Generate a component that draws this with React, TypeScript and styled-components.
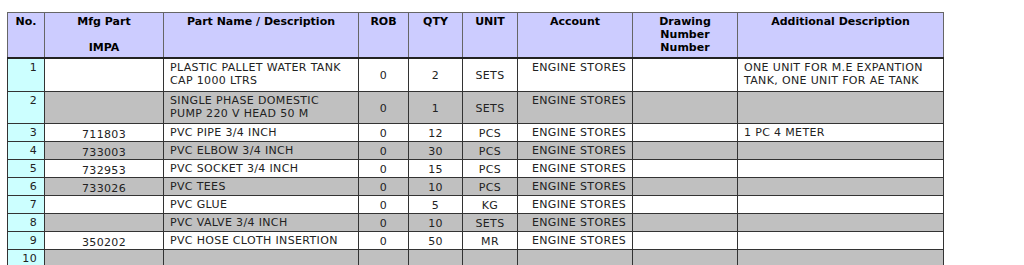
import React from "react";
import styled, { createGlobalStyle } from "styled-components";

const Global = createGlobalStyle`
  html, body { margin: 0; padding: 0; background: #ffffff; }
  body { font-family: "DejaVu Sans", Verdana, sans-serif; }
`;

const Page = styled.div`
  padding: 12px 0 0 7px;
`;

const Table = styled.table`
  border-collapse: collapse;
  table-layout: fixed;
  width: 937px;
  font-family: "DejaVu Sans", Verdana, sans-serif;
  font-size: 11px;
  color: #222;
  border: 1px solid #444;
`;

const HeadCell = styled.th`
  background: #ccccff;
  color: #000;
  font-weight: bold;
  text-align: center;
  vertical-align: top;
  line-height: 13px;
  padding: 2px 2px 0;
  height: 42px;
  border: 1px solid #666;
  border-bottom: 2px solid #222;
`;

type Align = "left" | "center" | "right";

const Cell = styled.td<{ $align?: Align; $middle?: boolean; $pl?: number; $pr?: number }>`
  text-align: ${(p) => p.$align ?? "left"};
  vertical-align: ${(p) => (p.$middle ? "middle" : "top")};
  line-height: 13px;
  letter-spacing: 0.35px;
  padding: 2px ${(p) => p.$pr ?? 2}px 0 ${(p) => p.$pl ?? 2}px;
  border: 1px solid #333;
  white-space: normal;
`;

const NoCell = styled(Cell)`
  background: #ccffff;
`;

const ImpaText = styled.span`
  display: inline-block;
  padding-top: 2px;
`;

const Row = styled.tr<{ $gray: boolean; $h: number }>`
  background: ${(p) => (p.$gray ? "#c0c0c0" : "#ffffff")};
  height: ${(p) => p.$h}px;
`;

const cols = [37, 119, 195, 50, 54, 55, 115, 105, 206];

type Item = {
  no: number;
  impa?: string;
  name?: React.ReactNode;
  rob?: string;
  qty?: string;
  unit?: string;
  account?: string;
  add?: React.ReactNode;
  h: number;
};

const items: Item[] = [
  {
    no: 1,
    name: (
      <>
        PLASTIC PALLET WATER TANK
        <br />
        CAP 1000 LTRS
      </>
    ),
    rob: "0",
    qty: "2",
    unit: "SETS",
    account: "ENGINE STORES",
    add: (
      <>
        ONE UNIT FOR M.E EXPANTION
        <br />
        TANK, ONE UNIT FOR AE TANK
      </>
    ),
    h: 33,
  },
  {
    no: 2,
    name: (
      <>
        SINGLE PHASE DOMESTIC
        <br />
        PUMP 220 V HEAD 50 M
      </>
    ),
    rob: "0",
    qty: "1",
    unit: "SETS",
    account: "ENGINE STORES",
    h: 32,
  },
  { no: 3, impa: "711803", name: "PVC PIPE 3/4 INCH", rob: "0", qty: "12", unit: "PCS", account: "ENGINE STORES", add: "1 PC 4 METER", h: 18 },
  { no: 4, impa: "733003", name: "PVC ELBOW 3/4 INCH", rob: "0", qty: "30", unit: "PCS", account: "ENGINE STORES", h: 18 },
  { no: 5, impa: "732953", name: "PVC SOCKET 3/4 INCH", rob: "0", qty: "15", unit: "PCS", account: "ENGINE STORES", h: 18 },
  { no: 6, impa: "733026", name: "PVC TEES", rob: "0", qty: "10", unit: "PCS", account: "ENGINE STORES", h: 18 },
  { no: 7, name: "PVC GLUE", rob: "0", qty: "5", unit: "KG", account: "ENGINE STORES", h: 18 },
  { no: 8, name: "PVC VALVE 3/4 INCH", rob: "0", qty: "10", unit: "SETS", account: "ENGINE STORES", h: 18 },
  { no: 9, impa: "350202", name: "PVC HOSE CLOTH INSERTION", rob: "0", qty: "50", unit: "MR", account: "ENGINE STORES", h: 18 },
  { no: 10, h: 18 },
];

export default function App() {
  return (
    <Page>
      <Global />
      <Table>
        <colgroup>
          {cols.map((w, i) => (
            <col key={i} style={{ width: w }} />
          ))}
        </colgroup>
        <thead>
          <tr>
            <HeadCell>No.</HeadCell>
            <HeadCell>
              Mfg Part
              <br />
              <br />
              IMPA
            </HeadCell>
            <HeadCell>Part Name / Description</HeadCell>
            <HeadCell>ROB</HeadCell>
            <HeadCell>QTY</HeadCell>
            <HeadCell>UNIT</HeadCell>
            <HeadCell>Account</HeadCell>
            <HeadCell>
              Drawing
              <br />
              Number
              <br />
              Number
            </HeadCell>
            <HeadCell>Additional Description</HeadCell>
          </tr>
        </thead>
        <tbody>
          {items.map((it, i) => (
            <Row key={it.no} $gray={i % 2 === 1} $h={it.h}>
              <NoCell $align="right" $pr={7}>
                {it.no}
              </NoCell>
              <Cell $align="center">
                <ImpaText>{it.impa}</ImpaText>
              </Cell>
              <Cell $pl={6}>{it.name}</Cell>
              <Cell $align="center" $middle>
                {it.rob}
              </Cell>
              <Cell $align="center" $middle>
                {it.qty}
              </Cell>
              <Cell $align="center" $middle>
                {it.unit}
              </Cell>
              <Cell $align="center" $pl={10}>
                {it.account}
              </Cell>
              <Cell />
              <Cell $pl={6}>{it.add}</Cell>
            </Row>
          ))}
        </tbody>
      </Table>
    </Page>
  );
}
